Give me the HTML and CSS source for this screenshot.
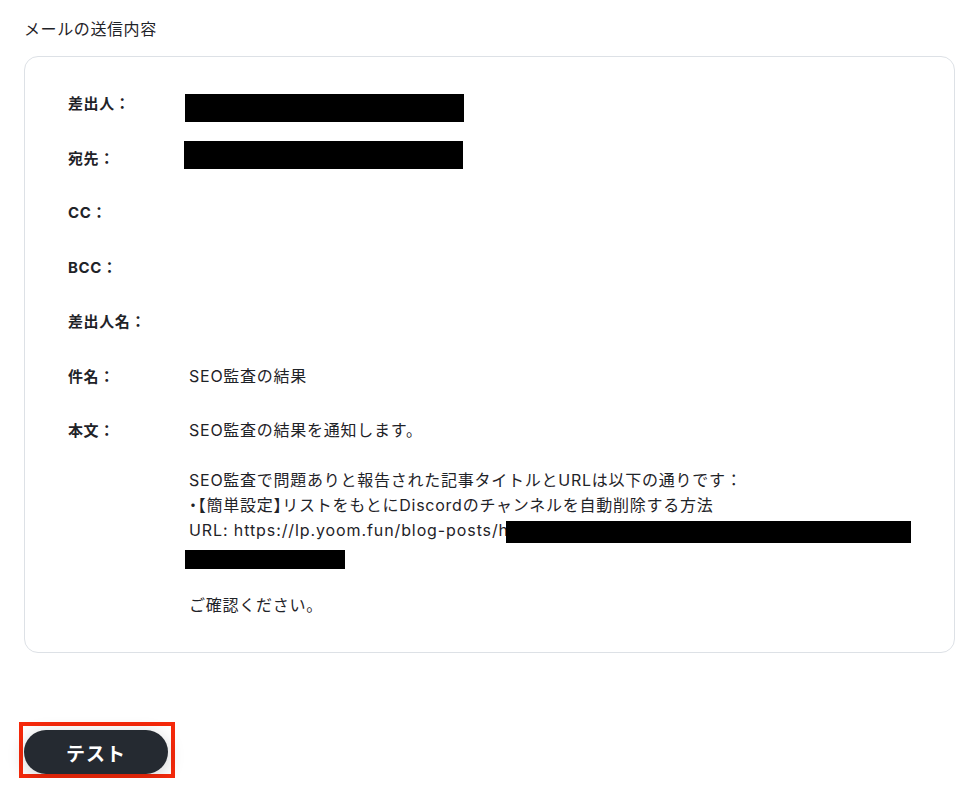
FILE: index.html
```html
<!DOCTYPE html>
<html lang="ja">
<head>
  <meta charset="UTF-8">
  <meta name="viewport" content="width=device-width, initial-scale=1.0">
  <title>メールの送信内容</title>
  <link rel="stylesheet" href="styles.css">
</head>
<body>

  <!-- Section title -->
  <div class="section-title">メールの送信内容</div>

  <!-- Mail preview card -->
  <div class="mail-card">
    <div class="mail-row">
      <div class="mail-label">差出人：</div>
      <div class="mail-value"><span class="redact redact-from"></span></div>
    </div>
    <div class="mail-row">
      <div class="mail-label">宛先：</div>
      <div class="mail-value"><span class="redact redact-to"></span></div>
    </div>
    <div class="mail-row">
      <div class="mail-label">CC：</div>
      <div class="mail-value"></div>
    </div>
    <div class="mail-row">
      <div class="mail-label">BCC：</div>
      <div class="mail-value"></div>
    </div>
    <div class="mail-row">
      <div class="mail-label">差出人名：</div>
      <div class="mail-value"></div>
    </div>
    <div class="mail-row">
      <div class="mail-label">件名：</div>
      <div class="mail-value">SEO監査の結果</div>
    </div>
    <div class="mail-row">
      <div class="mail-label">本文：</div>
      <div class="mail-value body-text">
        <p>SEO監査の結果を通知します。</p>
        <p>&nbsp;</p>
        <p>SEO監査で問題ありと報告された記事タイトルとURLは以下の通りです：</p>
        <p><span class="half">・【</span>簡単設定<span class="half">】</span>リストをもとにDiscordのチャンネルを自動削除する方法</p>
        <p class="url-line">URL: https://lp.yoom.fun/blog-posts/h<span class="redact redact-url"></span></p>
        <p><span class="redact redact-url2"></span></p>
        <p>&nbsp;</p>
        <p>ご確認ください。</p>
      </div>
    </div>
  </div>

  <!-- Test button -->
  <div class="button-area">
    <div class="highlight">
      <button class="test-button">テスト</button>
    </div>
  </div>

</body>
</html>
```

FILE: styles.css
```css
/* General */
body, html {
  margin: 0;
  padding: 0;
  background-color: #ffffff;
  font-family: Inter, "Noto Sans CJK JP", sans-serif;
  color: #1f2328;
}

body {
  padding: 19px 19px 0 24px;
}

/* Title */
.section-title {
  font-size: 16px;
  line-height: 21px;
  letter-spacing: 0.6px;
  margin-bottom: 16px;
}

/* Card */
.mail-card {
  border: 1px solid #dde1e6;
  border-radius: 14px;
  padding: 34px 40px 34px 43px;
  display: flex;
  flex-direction: column;
  gap: 29.5px;
  width: 846px;
}

.mail-row {
  display: grid;
  grid-template-columns: 121px 1fr;
  font-size: 15px;
  line-height: 25px;
}

.mail-label {
  font-weight: 700;
  letter-spacing: 0.6px;
}

.mail-value {
  min-height: 25px;
  font-size: 16px;
  letter-spacing: 0.75px;
}

.body-text p {
  margin: 0;
  white-space: nowrap;
}

.half {
  font-feature-settings: "halt";
}

.url-line {
  letter-spacing: 0.9px;
}

/* Redacted blocks */
.redact {
  display: inline-block;
  background-color: #000000;
  vertical-align: top;
}

.redact-from {
  width: 279px;
  height: 28px;
  margin: 3px 0 -6px -4px;
}

.redact-to {
  width: 279px;
  height: 28px;
  margin: -5px 0 -2px -5px;
}

.redact-url {
  width: 405px;
  height: 22px;
  margin: 3px 0 -3px -3px;
}

.redact-url2 {
  width: 160px;
  height: 19px;
  margin: 7px 0 -1px -4px;
}

/* Button */
.button-area {
  margin-top: 69px;
  margin-left: -5px;
}

.highlight {
  display: inline-block;
  border: 4.5px solid #f5290b;
  padding: 4px 3px 0 1px;
}

.test-button {
  display: block;
  width: 144px;
  height: 44px;
  border: none;
  border-radius: 22px;
  background-color: #252a31;
  color: #ffffff;
  font-family: Inter, "Noto Sans CJK JP", sans-serif;
  font-size: 19px;
  font-weight: 700;
  letter-spacing: 1px;
  cursor: pointer;
  box-shadow: 0px 4px 18px rgba(0, 0, 0, 0.18);
}
```
